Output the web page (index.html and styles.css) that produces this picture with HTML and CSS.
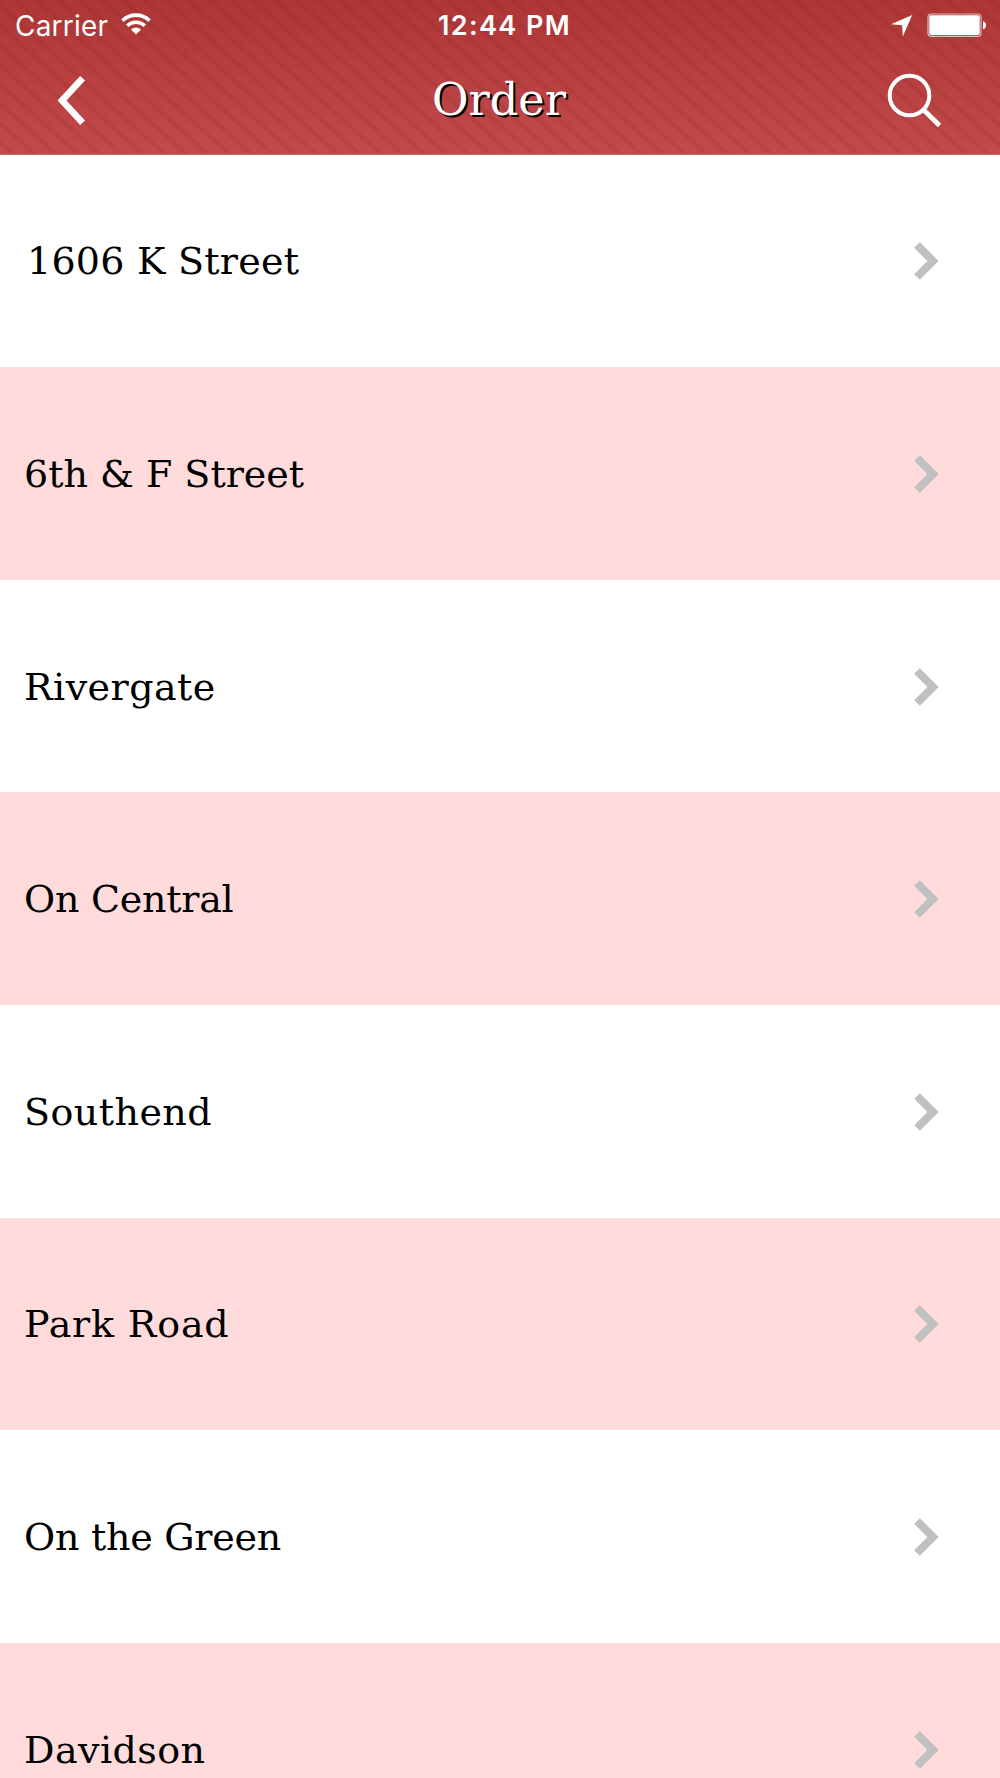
FILE: index.html
```html
<!DOCTYPE html>
<html lang="en">
<head>
  <meta charset="UTF-8" />
  <meta name="viewport" content="width=device-width, initial-scale=1.0" />
  <title>Order</title>
  <link rel="stylesheet" href="styles.css">
</head>
<body>
  <header class="header">
    <div class="status-bar">
      <div class="carrier">
        <span>Carrier</span>
        <svg class="wifi" viewBox="0 0 30 22" fill="none" stroke="#fff" stroke-width="3.6">
          <path d="M1.5 7.6a19.5 19.5 0 0 1 27 0" />
          <path d="M6.2 12.7a12.8 12.8 0 0 1 17.6 0" />
          <path d="M15 21.5l-5-5a7.2 7.2 0 0 1 10 0z" fill="#fff" stroke="none" />
        </svg>
      </div>
      <time class="clock">12:44 PM</time>
      <div class="indicators">
        <svg class="location" viewBox="0 0 22 22"><path d="M21.2 0L11.8 21.4 11.2 10.2 0 9.3z" fill="#fff" /></svg>
        <svg class="battery" viewBox="0 0 60 25">
          <rect x="1" y="1" width="53" height="22.4" rx="3.5" fill="none" stroke="#fff" stroke-opacity=".65" stroke-width="1.2" />
          <rect x="2.3" y="2.3" width="50.4" height="19.8" rx="2" fill="#fff" />
          <path d="M56 8.2q3 1 3 4t-3 4z" fill="#fff" />
        </svg>
      </div>
    </div>
    <nav class="nav-bar">
      <a href="#" class="back" aria-label="Back">
        <svg viewBox="0 0 28 50"><path d="M24.6 2.2L4 24.5l20.6 22.3" fill="none" stroke="#fff" stroke-width="6.6" /></svg>
      </a>
      <h1>Order</h1>
      <a href="#" class="search" aria-label="Search">
        <svg viewBox="0 0 56 56" fill="none" stroke="#fff">
          <circle cx="22.5" cy="22.5" r="19.8" stroke-width="4" />
          <path d="M36.5 36.7L52.5 52.5" stroke-width="4.8" />
        </svg>
      </a>
    </nav>
  </header>
  <main>
    <ul class="locations">
      <li><a href="#"><span class="name k-street">1606 K Street</span><svg class="arrow" viewBox="0 0 26 38"><path d="M3 3L19 19 3 35" /></svg></a></li>
      <li><a href="#"><span class="name">6th &amp; F Street</span><svg class="arrow" viewBox="0 0 26 38"><path d="M3 3L19 19 3 35" /></svg></a></li>
      <li><a href="#"><span class="name loose">Rivergate</span><svg class="arrow" viewBox="0 0 26 38"><path d="M3 3L19 19 3 35" /></svg></a></li>
      <li><a href="#"><span class="name tight">On Central</span><svg class="arrow" viewBox="0 0 26 38"><path d="M3 3L19 19 3 35" /></svg></a></li>
      <li><a href="#"><span class="name loose">Southend</span><svg class="arrow" viewBox="0 0 26 38"><path d="M3 3L19 19 3 35" /></svg></a></li>
      <li><a href="#"><span class="name looser">Park Road</span><svg class="arrow" viewBox="0 0 26 38"><path d="M3 3L19 19 3 35" /></svg></a></li>
      <li><a href="#"><span class="name tight">On the Green</span><svg class="arrow" viewBox="0 0 26 38"><path d="M3 3L19 19 3 35" /></svg></a></li>
      <li><a href="#"><span class="name loose">Davidson</span><svg class="arrow" viewBox="0 0 26 38"><path d="M3 3L19 19 3 35" /></svg></a></li>
    </ul>
  </main>
</body>
</html>
```

FILE: styles.css
```css
* {
  margin: 0;
  padding: 0;
  box-sizing: border-box;
}
body {
  width: 1000px;
  height: 1778px;
  overflow: hidden;
  background: #fff;
  color: #000;
  font-family: "American Typewriter", "DejaVu Serif", serif;
}
svg {
  display: block;
}
/* Header */
.header {
  height: 154.6px;
  border-bottom: 1px solid #d06b6b;
  color: #fff;
  background:
    repeating-linear-gradient(42deg, rgba(110, 20, 20, 0) 0 5px, rgba(110, 20, 20, 0.11) 8px 9px, rgba(110, 20, 20, 0) 12px 14.5px),
    linear-gradient(#ae3636, #c24a4a);
}
.status-bar {
  display: grid;
  grid-template-columns: 1fr auto 1fr;
  align-items: center;
  height: 50px;
  padding: 1px 13px 0 15px;
  font-family: Inter, sans-serif;
  font-size: 28px;
}
.carrier {
  display: flex;
  align-items: center;
  gap: 13px;
  letter-spacing: 0.2px;
}
.wifi {
  width: 30px;
  height: 22px;
  margin-top: -3px;
}
.clock {
  font-weight: 600;
  font-size: 27px;
  letter-spacing: 1.4px;
  margin-left: 7px;
}
.indicators {
  display: flex;
  justify-content: flex-end;
  align-items: center;
  gap: 14px;
}
.location {
  width: 22px;
  height: 22px;
}
.battery {
  width: 60px;
  height: 25px;
}
.nav-bar {
  display: grid;
  grid-template-columns: 1fr auto 1fr;
  align-items: center;
  height: 102px;
  padding: 0 57px 0 58px;
}
.back svg {
  width: 28px;
  height: 50px;
}
.nav-bar h1 {
  margin: -3px 3px 0 0;
  font-size: 44.5px;
  font-weight: 400;
  text-shadow: 2px 2px 0 #000;
}
.search {
  justify-self: end;
}
.search svg {
  width: 56px;
  height: 56px;
}
/* Location rows */
.locations {
  list-style: none;
}
.locations li a {
  display: flex;
  justify-content: space-between;
  align-items: center;
  height: 212.6px;
  padding: 1px 60px 0 24px;
  color: inherit;
  text-decoration: none;
}
.locations li:nth-child(even) {
  background: #ffdbdb;
}
.name {
  font-size: 38px;
}
.name.k-street {
  padding-left: 3px;
  letter-spacing: 0.25px;
}
.name.tight {
  letter-spacing: -0.25px;
}
.name.loose {
  letter-spacing: 0.45px;
}
.name.looser {
  letter-spacing: 0.8px;
}
.arrow {
  width: 26px;
  height: 38px;
  fill: none;
  stroke: #c0c0c0;
  stroke-width: 8;
}
```
